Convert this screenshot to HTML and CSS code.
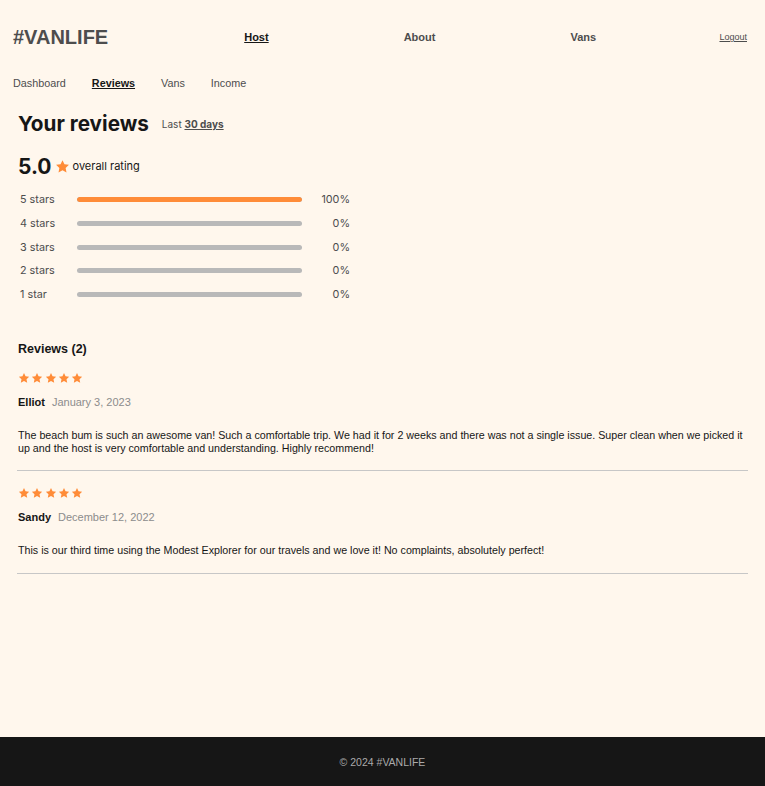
FILE: index.html
```html
<!DOCTYPE html>
<html>
<head>
<meta charset="utf-8">
<link rel="stylesheet" href="styles.css">
</head>
<body>
<div class="page">
  <header class="site-header">
    <a class="logo" href="#">#VANLIFE</a>
    <a class="nav-link active" href="#">Host</a>
    <a class="nav-link" href="#">About</a>
    <a class="nav-link" href="#">Vans</a>
    <a class="logout" href="#">Logout</a>
  </header>
  <nav class="host-nav">
    <a href="#">Dashboard</a>
    <a href="#" class="active">Reviews</a>
    <a href="#">Vans</a>
    <a href="#">Income</a>
  </nav>
  <main class="main">
    <section class="summary">
      <div class="title-row">
        <h1>Your reviews</h1>
        <p class="range">Last <span>30 days</span></p>
      </div>
      <div class="overall">
        <span class="score">5.0</span>
        <svg class="big-star" viewBox="0 0 24 24"><path d="M12 1.8l3.1 6.6 7.2.9-5.3 5 1.4 7.1L12 17.9l-6.4 3.5 1.4-7.1-5.3-5 7.2-.9z"/></svg>
        <span class="overall-label">overall rating</span>
      </div>
      <div class="bars">
        <div class="bar-row"><span class="bar-label">5 stars</span><div class="bar"><div class="bar-fill" style="width:100%"></div></div><span class="bar-pct">100%</span></div>
        <div class="bar-row"><span class="bar-label">4 stars</span><div class="bar"><div class="bar-fill" style="width:0%"></div></div><span class="bar-pct">0%</span></div>
        <div class="bar-row"><span class="bar-label">3 stars</span><div class="bar"><div class="bar-fill" style="width:0%"></div></div><span class="bar-pct">0%</span></div>
        <div class="bar-row"><span class="bar-label">2 stars</span><div class="bar"><div class="bar-fill" style="width:0%"></div></div><span class="bar-pct">0%</span></div>
        <div class="bar-row"><span class="bar-label">1 star</span><div class="bar"><div class="bar-fill" style="width:0%"></div></div><span class="bar-pct">0%</span></div>
      </div>
    </section>
    <section class="reviews">
      <h3>Reviews (2)</h3>
      <article class="review">
        <div class="stars">
          <svg viewBox="0 0 24 24"><path d="M12 1.8l3.1 6.6 7.2.9-5.3 5 1.4 7.1L12 17.9l-6.4 3.5 1.4-7.1-5.3-5 7.2-.9z"/></svg>
          <svg viewBox="0 0 24 24"><path d="M12 1.8l3.1 6.6 7.2.9-5.3 5 1.4 7.1L12 17.9l-6.4 3.5 1.4-7.1-5.3-5 7.2-.9z"/></svg>
          <svg viewBox="0 0 24 24"><path d="M12 1.8l3.1 6.6 7.2.9-5.3 5 1.4 7.1L12 17.9l-6.4 3.5 1.4-7.1-5.3-5 7.2-.9z"/></svg>
          <svg viewBox="0 0 24 24"><path d="M12 1.8l3.1 6.6 7.2.9-5.3 5 1.4 7.1L12 17.9l-6.4 3.5 1.4-7.1-5.3-5 7.2-.9z"/></svg>
          <svg viewBox="0 0 24 24"><path d="M12 1.8l3.1 6.6 7.2.9-5.3 5 1.4 7.1L12 17.9l-6.4 3.5 1.4-7.1-5.3-5 7.2-.9z"/></svg>
        </div>
        <div class="info"><span class="name">Elliot</span><span class="date">January 3, 2023</span></div>
        <p class="text">The beach bum is such an awesome van! Such a comfortable trip. We had it for 2 weeks and there was not a single issue. Super clean when we picked it up and the host is very comfortable and understanding. Highly recommend!</p>
      </article>
      <article class="review">
        <div class="stars">
          <svg viewBox="0 0 24 24"><path d="M12 1.8l3.1 6.6 7.2.9-5.3 5 1.4 7.1L12 17.9l-6.4 3.5 1.4-7.1-5.3-5 7.2-.9z"/></svg>
          <svg viewBox="0 0 24 24"><path d="M12 1.8l3.1 6.6 7.2.9-5.3 5 1.4 7.1L12 17.9l-6.4 3.5 1.4-7.1-5.3-5 7.2-.9z"/></svg>
          <svg viewBox="0 0 24 24"><path d="M12 1.8l3.1 6.6 7.2.9-5.3 5 1.4 7.1L12 17.9l-6.4 3.5 1.4-7.1-5.3-5 7.2-.9z"/></svg>
          <svg viewBox="0 0 24 24"><path d="M12 1.8l3.1 6.6 7.2.9-5.3 5 1.4 7.1L12 17.9l-6.4 3.5 1.4-7.1-5.3-5 7.2-.9z"/></svg>
          <svg viewBox="0 0 24 24"><path d="M12 1.8l3.1 6.6 7.2.9-5.3 5 1.4 7.1L12 17.9l-6.4 3.5 1.4-7.1-5.3-5 7.2-.9z"/></svg>
        </div>
        <div class="info"><span class="name">Sandy</span><span class="date">December 12, 2022</span></div>
        <p class="text">This is our third time using the Modest Explorer for our travels and we love it! No complaints, absolutely perfect!</p>
      </article>
    </section>
  </main>
  <footer class="site-footer">© 2024 #VANLIFE</footer>
</div>
</body>
</html>
```
FILE: styles.css
```css
* { box-sizing: border-box; }
html, body { margin: 0; padding: 0; }
body {
  background: #FFF7ED;
  font-family: "Liberation Sans", Arial, sans-serif;
  color: #161616;
}
a { color: inherit; }
.page {
  min-height: 100vh;
  display: flex;
  flex-direction: column;
}
.site-header {
  height: 74px;
  display: flex;
  align-items: center;
  padding: 0 18px 0 13px;
}
.logo {
  font-size: 20px;
  font-weight: 700;
  color: #4D4D4D;
  text-decoration: none;
  margin-right: 136px;
}
.nav-link {
  font-size: 11px;
  font-weight: 700;
  color: #4D4D4D;
  text-decoration: none;
}
.nav-link + .nav-link {
  margin-left: 135px;
}
.nav-link.active {
  color: #161616;
  text-decoration: underline;
}
.logout {
  margin-left: auto;
  font-size: 9px;
  color: #4D4D4D;
  text-decoration: underline;
}
.host-nav {
  height: 18px;
  display: flex;
  align-items: center;
  gap: 26px;
  padding: 0 13px;
}
.host-nav a {
  font-size: 10.8px;
  color: #4D4D4D;
  text-decoration: none;
}
.host-nav a.active {
  font-weight: 700;
  color: #161616;
  text-decoration: underline;
}
.main {
  flex: 1;
  padding: 0 17px;
}
.summary {
  font-family: Inter, "Liberation Sans", sans-serif;
  padding-top: 18px;
}
.title-row {
  display: flex;
  align-items: center;
  gap: 13px;
  padding-left: 1px;
}
.title-row h1 {
  margin: 0;
  font-size: 20.7px;
  font-weight: 700;
  color: #161616;
  line-height: 28px;
}
.range {
  margin: 0;
  font-size: 10px;
  color: #4D4D4D;
}
.range span {
  font-weight: 700;
  text-decoration: underline;
}
.overall {
  display: flex;
  align-items: center;
  margin-top: 14px;
  padding-left: 1px;
  height: 28px;
}
.score {
  font-size: 21px;
  font-weight: 700;
  color: #161616;
}
.big-star {
  width: 15px;
  height: 15px;
  fill: #FF8C38;
  margin-left: 3px;
  margin-right: 3px;
}
.overall-label {
  font-size: 11px;
  color: #161616;
}
.bars {
  margin-top: 8px;
  display: flex;
  flex-direction: column;
}
.bar-row {
  display: flex;
  align-items: center;
  height: 23.7px;
  width: 333px;
  padding-left: 3px;
}
.bar-label {
  width: 57px;
  font-size: 10.8px;
  color: #4D4D4D;
}
.bar {
  width: 225px;
  height: 5px;
  border-radius: 3px;
  background: #B9B9B9;
  overflow: hidden;
}
.bar-fill {
  height: 100%;
  background: #FF8C38;
  border-radius: 3px;
}
.bar-pct {
  flex: 1;
  text-align: right;
  font-size: 10.8px;
  color: #4D4D4D;
}
.reviews {
  margin-top: 35px;
}
.reviews h3 {
  margin: 0;
  padding-left: 1px;
  font-size: 12.5px;
  font-weight: 700;
  line-height: 16px;
  color: #161616;
}
.review {
  border-bottom: 1px solid #C7C7C7;
  padding-bottom: 16px;
  margin-top: 15px;
}
.review + .review { margin-top: 16px; }
.stars {
  display: flex;
  gap: 1.3px;
  padding-left: 1px;
}
.stars svg {
  width: 12px;
  height: 12px;
  fill: #FF8C38;
}
.info {
  margin-top: 11px;
  padding-left: 1px;
  font-size: 11px;
  line-height: 14px;
  display: flex;
  gap: 7px;
}
.name { font-weight: 700; color: #161616; }
.date { color: #8C8C8C; }
.text {
  margin: 20px 0 0;
  padding-left: 1px;
  font-size: 10.7px;
  line-height: 12.5px;
  color: #161616;
}
.site-footer {
  height: 49px;
  background: #161616;
  color: #AAAAAA;
  font-size: 10.5px;
  display: flex;
  align-items: center;
  justify-content: center;
}
```
